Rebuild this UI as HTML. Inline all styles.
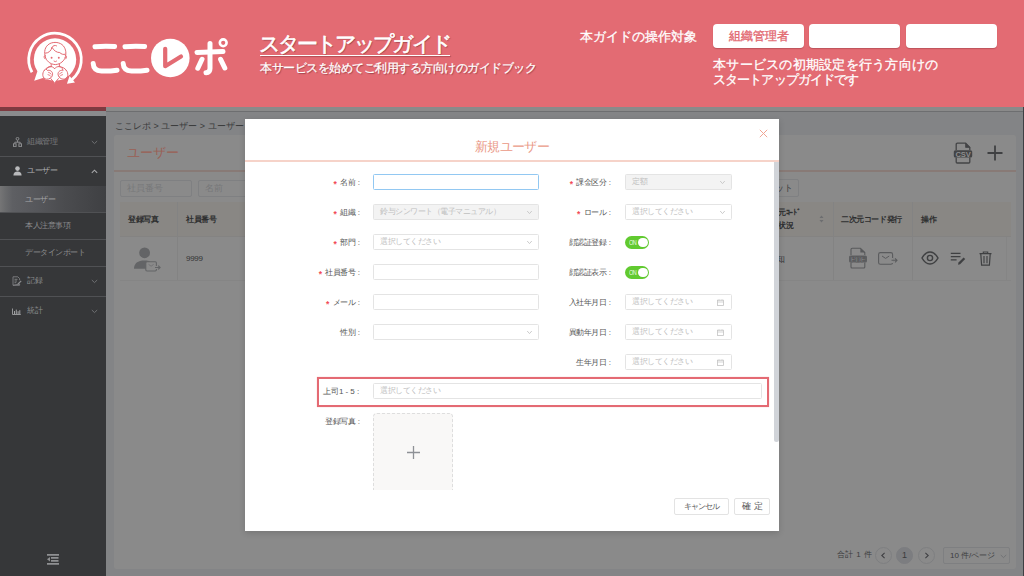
<!DOCTYPE html>
<html lang="ja">
<head>
<meta charset="utf-8">
<title>スタートアップガイド</title>
<style>
*{box-sizing:border-box;margin:0;padding:0}
html,body{width:1024px;height:576px;overflow:hidden}
body{position:relative;font-family:"Liberation Sans",sans-serif;background:#838486;color:#333}
.a{position:absolute}
/* header banner */
#hdr{left:0;top:0;width:1024px;height:107px;background:#E36B73;color:#fff}
#title{left:259px;top:33px;font-size:21px;line-height:22px;letter-spacing:-2.8px;white-space:nowrap;-webkit-text-stroke:0.65px #fff;text-shadow:1px 1px 1px rgba(90,30,35,.5)}
#title-ul{left:260px;top:55px;width:190px;height:1px;background:#fff;box-shadow:1px 1px 1px rgba(90,30,35,.4)}
#sub{left:260px;top:61px;font-size:12px;line-height:15px;white-space:nowrap;letter-spacing:-0.5px;-webkit-text-stroke:0.25px #fff;text-shadow:1px 1px 1px rgba(90,30,35,.5)}
#tgt{left:580px;top:29px;font-size:13px;line-height:16px;white-space:nowrap;-webkit-text-stroke:0.3px #fff}
.hbtn{top:24px;height:24px;background:#fff;border-radius:4px;color:#E36B73;font-size:12px;line-height:25px;text-align:center;-webkit-text-stroke:0.35px #E36B73;box-shadow:0 1px 1px rgba(120,40,45,.35)}
#desc{left:713px;top:58px;font-size:13px;line-height:14.5px;white-space:nowrap;-webkit-text-stroke:0.3px #fff}
/* app strip */
#apphdrL{left:0;top:107px;width:106px;height:4px;background:#7d3a40}
#apphdrR{left:106px;top:107px;width:918px;height:4px;background:#8a8a8a}
#apphdrLine{left:106px;top:111px;width:918px;height:1px;background:#6d6e70}
#strip{left:0;top:111px;width:106px;height:5px;background:#8a8b8d}
#rightedge{left:1023px;top:107px;width:1px;height:469px;background:#3e3f43}
/* sidebar */
#side{left:0;top:116px;width:106px;height:460px;background:#363739}
.sep{left:0;width:106px;height:1px;background:#505154}
.mi{left:0;width:106px;height:20px;font-size:8px;line-height:20px;color:#8e8f91;white-space:nowrap;letter-spacing:-0.5px}
/* card */
#bc{left:115px;top:119px;font-size:9px;line-height:14px;color:#3a3b3c;white-space:nowrap}
#card{left:114px;top:135px;width:902px;height:434px;background:#8a8a8a;border-radius:2px}
.inp{height:17px;border:1px solid #7f8082;border-radius:2px}
.inp span{position:absolute;left:6px;top:0;font-size:9px;line-height:15px;color:#767779;white-space:nowrap}
.th{font-size:8px;line-height:16px;color:#2e2f30;font-weight:bold;white-space:nowrap;letter-spacing:-0.4px}
.td{font-size:9px;line-height:14px;color:#333435;white-space:nowrap}
.pg{width:17px;height:17px;border:1px solid #7e7f81;border-radius:50%}
.pg svg{position:absolute;left:-1px;top:-1px}
#mtitle{left:0;width:534px;top:19px;text-align:center;font-size:13px;line-height:18px;color:#ea9886;letter-spacing:-0.6px;white-space:nowrap}
#mscroll{left:529px;top:43px;width:5px;height:280px;background:#d1d4d9;border-radius:0 0 3px 3px}
.lab{font-size:8px;line-height:17.5px;color:#555;white-space:nowrap;text-align:right;letter-spacing:-0.6px;padding-right:5px}
.lab b{color:#f24a55;font-weight:bold;font-size:8.5px;margin-right:4px;position:relative;top:1.5px}
.lab u{position:absolute;right:0.6px;top:0;text-decoration:none;font-size:8px}
.fi{height:16px;border:1px solid #e4e4e4;border-radius:1.5px;background:#fff}
.fi span{position:absolute;left:6px;top:0;font-size:8px;line-height:14px;color:#c0c0c0;white-space:nowrap;letter-spacing:-0.5px}
.dis{background:#f3f3f3}
.tog{width:24px;height:12.5px;border-radius:6.5px;background:#61ca30}
.tog span{position:absolute;left:4px;top:0.8px;font-size:6.5px;line-height:12.5px;color:#e8f8e0;letter-spacing:-0.6px;transform:scaleX(0.85);transform-origin:left}
.tog i{position:absolute;right:1.5px;top:1.5px;width:9.5px;height:9.5px;border-radius:50%;background:#fff}
.mbtn{top:379px;height:17px;border:1px solid #e3e3e3;border-radius:2px;font-size:8.5px;line-height:15px;text-align:center;color:#555;white-space:nowrap}
/* overlay modal */
#modal{left:245px;top:119px;width:534px;height:412px;background:#fff;box-shadow:0 2px 6px rgba(0,0,0,.15)}
</style>
</head>
<body>
<!-- underlying app (dimmed) -->
<div class="a" id="apphdrL"></div>
<div class="a" id="apphdrR"></div>
<div class="a" id="apphdrLine"></div>
<div class="a" id="strip"></div>
<div class="a" id="side">
 <div class="a mi" style="top:16px"><svg class="a" style="left:13px;top:5px" width="9" height="10" viewBox="0 0 9 10"><circle cx="4.5" cy="1.8" r="1.4" fill="none" stroke="#8b8c8e" stroke-width="1"/><path d="M4.5 3.3V5.2M1.8 5.2H7.2M1.8 5.2V6.6M7.2 5.2V6.6" stroke="#8b8c8e" stroke-width="1" fill="none"/><rect x="0.5" y="6.8" width="2.6" height="2.6" fill="none" stroke="#8b8c8e" stroke-width="1"/><rect x="5.9" y="6.8" width="2.6" height="2.6" fill="none" stroke="#8b8c8e" stroke-width="1"/></svg><span class="a" style="left:27px;color:#7b7c7f">組織管理</span><svg class="a chev" style="left:91px;top:8px" width="7" height="5" viewBox="0 0 7 5"><path d="M0.8 1L3.5 3.6L6.2 1" fill="none" stroke="#6f7073" stroke-width="1"/></svg></div>
 <div class="a sep" style="top:40px"></div>
 <div class="a mi" style="top:45px"><svg class="a" style="left:13px;top:5px" width="9" height="10" viewBox="0 0 9 10"><circle cx="4.5" cy="2.6" r="2.3" fill="#b9babc"/><path d="M0.4 9.6C0.4 6.8 2 5.6 4.5 5.6C7 5.6 8.6 6.8 8.6 9.6Z" fill="#b9babc"/></svg><span class="a" style="left:27px;color:#b4b5b7">ユーザー</span><svg class="a" style="left:91px;top:8px" width="7" height="5" viewBox="0 0 7 5"><path d="M0.8 3.8L3.5 1.2L6.2 3.8" fill="none" stroke="#a8a9ab" stroke-width="1.1"/></svg></div>
 <div class="a" style="left:0;top:70px;width:106px;height:26px;background:linear-gradient(90deg,#757576 0%,#6a6b6d 5%,#5e5f63 12%,#56575b 35%,#4b4c4f 60%,#3f4043 100%)"><span class="a" style="left:25px;top:4px;font-size:8px;line-height:20px;color:#a6a7a9;white-space:nowrap;letter-spacing:-0.5px">ユーザー</span></div>
 <div class="a sep" style="top:96px"></div>
 <div class="a mi" style="top:100px"><span class="a" style="left:25px;color:#8b8c8e">本人注意事項</span></div>
 <div class="a sep" style="top:123px"></div>
 <div class="a mi" style="top:127px"><span class="a" style="left:25px;color:#8b8c8e">データインポート</span></div>
 <div class="a sep" style="top:150px"></div>
 <div class="a mi" style="top:155px"><svg class="a" style="left:12px;top:5px" width="10" height="10" viewBox="0 0 10 10"><path d="M1 0.8H5.8L7.6 2.6V4.2M7.6 8V9.3H1Z" fill="none" stroke="#7f8083" stroke-width="0.9"/><path d="M1 0.8V9.3" stroke="#7f8083" stroke-width="0.9"/><path d="M2.5 3.3H5.5M2.5 5H5M2.5 6.7H4.3" stroke="#8e8f91" stroke-width="0.8"/><path d="M5.6 7.6L8.8 4.4L9.6 5.2L6.4 8.4H5.6Z" fill="#8e8f91"/></svg><span class="a" style="left:27px;color:#8b8c8e">記録</span><svg class="a" style="left:91px;top:8px" width="7" height="5" viewBox="0 0 7 5"><path d="M0.8 1L3.5 3.6L6.2 1" fill="none" stroke="#6f7073" stroke-width="1"/></svg></div>
 <div class="a sep" style="top:180px"></div>
 <div class="a mi" style="top:185px"><svg class="a" style="left:12px;top:7px" width="9" height="7" viewBox="0 0 9 7"><path d="M0.5 0.5V6.5H8.8" fill="none" stroke="#a0a1a3" stroke-width="0.9"/><path d="M2.5 3V6M4.3 1.6V6M6.1 3.2V6M7.8 2.2V6" stroke="#a0a1a3" stroke-width="1"/></svg><span class="a" style="left:27px;color:#8b8c8e">統計</span><svg class="a" style="left:91px;top:8px" width="7" height="5" viewBox="0 0 7 5"><path d="M0.8 1L3.5 3.6L6.2 1" fill="none" stroke="#6f7073" stroke-width="1"/></svg></div>
 <svg class="a" style="left:46px;top:437px" width="14" height="12" viewBox="0 0 14 12"><path d="M1 1.8H13M5 4.8H12.5M5 7.8H12.5M1 10.8H13" stroke="#8f9092" stroke-width="1.7"/><path d="M4 4L1 6.3L4 8.6Z" fill="#8f9092"/></svg>
</div>
<div class="a" id="bc">ここレポ &gt; ユーザー &gt; ユーザー</div>
<div class="a" id="card">
 <div class="a" style="left:13px;top:9px;font-size:13px;line-height:18px;color:#9a5f54;white-space:nowrap">ユーザー</div>
 <div class="a" style="left:0;top:35px;width:902px;height:2px;background:#887a76"></div>
 <svg class="a" style="left:839px;top:7px" width="20" height="22" viewBox="0 0 20 22"><path d="M3.2 8V2.5Q3.2 1.2 4.5 1.2H12.6L16.8 5.4V8M16.8 15.5V20Q16.8 21 15.8 21H4.2Q3.2 21 3.2 20V15.5" fill="none" stroke="#434446" stroke-width="1.3"/><path d="M12.6 1.2V5.4H16.8Z" fill="#434446" stroke="#434446" stroke-width="0.8"/><rect x="0.8" y="8.2" width="18.4" height="7.4" rx="1.6" fill="#434446"/><text x="10" y="14.6" font-size="7.6" font-family="Liberation Sans" font-weight="bold" fill="#8e8e8e" text-anchor="middle" letter-spacing="-0.2">CSV</text></svg>
 <svg class="a" style="left:873px;top:10px" width="16" height="16" viewBox="0 0 16 16"><path d="M8 0.5V15.5M0.5 8H15.5" stroke="#3f4042" stroke-width="1.8"/></svg>
 <div class="a inp" style="left:6px;top:45px;width:72px"><span>社員番号</span></div>
 <div class="a inp" style="left:84px;top:45px;width:120px"><span>名前</span></div>
 <div class="a inp" style="left:640px;top:44px;width:45px;height:18px"><span style="left:3px;top:0.5px;color:#3e3f41;letter-spacing:-0.4px">リセット</span></div>
 <div class="a" style="left:6px;top:67px;width:891px;height:34px;background:#898784"></div>
 <div class="a" style="left:63px;top:67px;width:1px;height:78px;background:#838383"></div>
 <div class="a" style="left:719px;top:67px;width:1px;height:78px;background:#838383"></div>
 <div class="a" style="left:798px;top:67px;width:1px;height:78px;background:#838383"></div>
 <div class="a" style="left:6px;top:101px;width:891px;height:1px;background:#848382"></div>
 <div class="a" style="left:892px;top:102px;width:1px;height:43px;background:#858585"></div>
 <div class="a" style="left:6px;top:145px;width:891px;height:1px;background:#858585"></div>
 <div class="a th" style="left:14px;top:77px">登録写真</div>
 <div class="a th" style="left:72px;top:77px">社員番号</div>
 <div class="a th" style="left:649px;top:71px;line-height:13px">二次元ｺｰﾄﾞ<br>通知状況</div>
 <div class="a th" style="left:727px;top:77px">二次元コード発行</div>
 <div class="a th" style="left:807px;top:77px">操作</div>
 <svg class="a" style="left:705px;top:80px" width="5" height="8" viewBox="0 0 5 8"><path d="M2.5 0.5L4.5 3H0.5ZM2.5 7.5L4.5 5H0.5Z" fill="#6d6e70"/></svg>
 <svg class="a" style="left:20px;top:112px" width="28" height="28" viewBox="0 0 28 28"><circle cx="10.6" cy="5.8" r="5.4" fill="#636466"/><path d="M0 21.8C0 16 3.8 13.4 10.6 13.4C13 13.4 14.8 13.8 16 14.4V21.8Z" fill="#636466"/><rect x="11.8" y="14.8" width="10.6" height="9.2" rx="1.2" fill="#8a8a8a" stroke="#636466" stroke-width="1.1"/><path d="M14.6 17.4L17.1 19.2L19.6 17.4" fill="none" stroke="#707173" stroke-width="0.9"/><rect x="20.8" y="19" width="2.5" height="3" fill="#8a8a8a"/><path d="M21 20.5H26M24.2 18.6L26.1 20.5L24.2 22.4" fill="none" stroke="#636466" stroke-width="1.1"/></svg>
 <div class="a td" style="left:72px;top:117px;font-size:8px;letter-spacing:-0.3px">9999</div>
 <div class="a td" style="left:644px;top:117px;font-size:8.5px">未通知</div>
 <svg class="a" style="left:734px;top:112px" width="20" height="22" viewBox="0 0 20 22"><path d="M3 8V2.5Q3 1.2 4.3 1.2H12.4L16.8 5.6V8M16.8 15.5V20Q16.8 21 15.8 21H4Q3 21 3 20V15.5" fill="none" stroke="#58595b" stroke-width="1.1"/><path d="M12.4 1.2V5.6H16.8Z" fill="#58595b"/><rect x="1" y="8.4" width="18" height="7.2" rx="1.6" fill="#5e5f61"/><text x="10" y="14.5" font-size="7.8" font-family="Liberation Sans" font-weight="bold" fill="#9a9a9a" stroke="#505153" stroke-width="0.5" text-anchor="middle" letter-spacing="-0.3">PDF</text></svg>
 <svg class="a" style="left:764px;top:117px" width="20" height="14" viewBox="0 0 20 14"><rect x="0.6" y="0.6" width="14" height="11.6" rx="1.8" fill="none" stroke="#5a5b5d" stroke-width="1.1"/><path d="M4 4L7.6 6.4L11.2 4" fill="none" stroke="#5a5b5d" stroke-width="1"/><rect x="13" y="6" width="2.2" height="5" fill="#8a8a8a"/><path d="M13.5 8.3H19M17 6.3L19 8.3L17 10.3" fill="none" stroke="#5a5b5d" stroke-width="1.1"/></svg>
 <svg class="a" style="left:807px;top:116px" width="18" height="14" viewBox="0 0 18 14"><path d="M1 7C3.2 3 5.8 1 9 1S14.8 3 17 7C14.8 11 12.2 13 9 13S3.2 11 1 7Z" fill="none" stroke="#3f4042" stroke-width="1.5"/><circle cx="9" cy="7" r="2.6" fill="none" stroke="#3f4042" stroke-width="1.4"/></svg>
 <svg class="a" style="left:836px;top:117px" width="16" height="14" viewBox="0 0 16 14"><path d="M0.8 1.4H10.5M0.8 4.6H10.5M0.8 7.8H6.6" stroke="#3f4042" stroke-width="1.2"/><path d="M8 12.8L8.5 10.6L13.6 5.5L15.2 7.1L10.1 12.2Z" fill="#3f4042"/></svg>
 <svg class="a" style="left:865px;top:116px" width="13" height="15" viewBox="0 0 13 15"><path d="M0.5 2.6H12.5M4.3 2.6V1H8.7V2.6" fill="none" stroke="#3f4042" stroke-width="1.1"/><path d="M1.8 3L2.6 14.2H10.4L11.2 3" fill="none" stroke="#3f4042" stroke-width="1.2"/><path d="M5 5V12.3M8 5V12.3" stroke="#3f4042" stroke-width="1.1"/></svg>
 <div class="a" style="left:723px;top:414px;font-size:8px;line-height:12px;color:#3c3d3f;white-space:nowrap;word-spacing:1px">合計 1 件</div>
 <div class="a pg" style="left:761px;top:412px"><svg width="17" height="17" viewBox="0 0 17 17"><path d="M9.6 5.8L6.8 8.5L9.6 11.2" fill="none" stroke="#404144" stroke-width="1.1"/></svg></div>
 <div class="a pg" style="left:782px;top:412px;background:#7c7d80;border-color:#7c7d80;font-size:9px;line-height:15px;text-align:center;color:#3a3b3d">1</div>
 <div class="a pg" style="left:804px;top:412px"><svg width="17" height="17" viewBox="0 0 17 17"><path d="M7.4 5.8L10.2 8.5L7.4 11.2" fill="none" stroke="#404144" stroke-width="1.1"/></svg></div>
 <div class="a" style="left:829px;top:412px;width:67px;height:17px;border:1px solid #7e7f81;border-radius:2px;font-size:8px;line-height:15px;color:#3c3d3f;white-space:nowrap;padding-left:6px">10 件/ページ<svg class="a" style="left:56px;top:6px" width="7" height="5" viewBox="0 0 7 5"><path d="M0.8 1L3.5 3.6L6.2 1" fill="none" stroke="#6f7073" stroke-width="0.9"/></svg></div>
</div>
<div class="a" id="rightedge"></div>

<!-- modal -->
<div class="a" id="modal">
<div class="a" id="mtitle">新規ユーザー</div>
<svg class="a" style="left:514px;top:10px" width="9" height="9" viewBox="0 0 9 9"><path d="M0.8 0.8L8.2 8.2M8.2 0.8L0.8 8.2" stroke="#f0a594" stroke-width="1"/></svg>
<div class="a" style="left:0;top:41px;width:534px;height:2px;background:#f6d3c9"></div>
<div class="a" id="mscroll"></div>
<div class="a lab" style="right:419px;top:55px"><b>*</b>名前<u>:</u></div>
<div class="a fi" style="left:128px;top:55px;width:166px;border-color:#92c8f2"></div>
<div class="a lab" style="right:419px;top:85px"><b>*</b>組織<u>:</u></div>
<div class="a fi dis" style="left:128px;top:85px;width:166px"><span>鈴与シンワート（電子マニュアル）</span><svg class="a" style="right:5.5px;top:5px" width="7" height="5" viewBox="0 0 7 5"><path d="M1.2 1L3.5 3.6L5.8 1" fill="none" stroke="#c4c4c4" stroke-width="0.85"/></svg></div>
<div class="a lab" style="right:419px;top:115px"><b>*</b>部門<u>:</u></div>
<div class="a fi" style="left:128px;top:115px;width:166px"><span>選択してください</span><svg class="a" style="right:5.5px;top:5px" width="7" height="5" viewBox="0 0 7 5"><path d="M1.2 1L3.5 3.6L5.8 1" fill="none" stroke="#c4c4c4" stroke-width="0.85"/></svg></div>
<div class="a lab" style="right:419px;top:145px"><b>*</b>社員番号<u>:</u></div>
<div class="a fi" style="left:128px;top:145px;width:166px"></div>
<div class="a lab" style="right:419px;top:175px"><b>*</b>メール<u>:</u></div>
<div class="a fi" style="left:128px;top:175px;width:166px"></div>
<div class="a lab" style="right:419px;top:205px">性別<u>:</u></div>
<div class="a fi" style="left:128px;top:205px;width:166px"><svg class="a" style="right:5.5px;top:5px" width="7" height="5" viewBox="0 0 7 5"><path d="M1.2 1L3.5 3.6L5.8 1" fill="none" stroke="#c4c4c4" stroke-width="0.85"/></svg></div>
<div class="a lab" style="right:168px;top:55px"><b>*</b>課金区分<u>:</u></div>
<div class="a fi dis" style="left:380px;top:55px;width:107px"><span>定額</span><svg class="a" style="right:5.5px;top:5px" width="7" height="5" viewBox="0 0 7 5"><path d="M1.2 1L3.5 3.6L5.8 1" fill="none" stroke="#c4c4c4" stroke-width="0.85"/></svg></div>
<div class="a lab" style="right:168px;top:85px"><b>*</b>ロール<u>:</u></div>
<div class="a fi" style="left:380px;top:85px;width:107px"><span>選択してください</span><svg class="a" style="right:5.5px;top:5px" width="7" height="5" viewBox="0 0 7 5"><path d="M1.2 1L3.5 3.6L5.8 1" fill="none" stroke="#c4c4c4" stroke-width="0.85"/></svg></div>
<div class="a lab" style="right:168px;top:115px">顔認証登録<u>:</u></div>
<div class="a tog" style="left:380px;top:117px"><span>ON</span><i></i></div>
<div class="a lab" style="right:168px;top:145px">顔認証表示<u>:</u></div>
<div class="a tog" style="left:380px;top:147px"><span>ON</span><i></i></div>
<div class="a lab" style="right:168px;top:175px">入社年月日<u>:</u></div>
<div class="a fi" style="left:380px;top:175px;width:107px"><span>選択してください</span><svg class="a" style="right:7px;top:4px" width="7" height="7" viewBox="0 0 7 7"><rect x="0.5" y="1.2" width="6" height="5.3" fill="none" stroke="#c4c4c4" stroke-width="0.8"/><path d="M0.5 3H6.5M2 0.3V1.8M5 0.3V1.8" stroke="#c4c4c4" stroke-width="0.7"/></svg></div>
<div class="a lab" style="right:168px;top:205px">異動年月日<u>:</u></div>
<div class="a fi" style="left:380px;top:205px;width:107px"><span>選択してください</span><svg class="a" style="right:7px;top:4px" width="7" height="7" viewBox="0 0 7 7"><rect x="0.5" y="1.2" width="6" height="5.3" fill="none" stroke="#c4c4c4" stroke-width="0.8"/><path d="M0.5 3H6.5M2 0.3V1.8M5 0.3V1.8" stroke="#c4c4c4" stroke-width="0.7"/></svg></div>
<div class="a lab" style="right:168px;top:235px">生年月日<u>:</u></div>
<div class="a fi" style="left:380px;top:235px;width:107px"><span>選択してください</span><svg class="a" style="right:7px;top:4px" width="7" height="7" viewBox="0 0 7 7"><rect x="0.5" y="1.2" width="6" height="5.3" fill="none" stroke="#c4c4c4" stroke-width="0.8"/><path d="M0.5 3H6.5M2 0.3V1.8M5 0.3V1.8" stroke="#c4c4c4" stroke-width="0.7"/></svg></div>
<div class="a" style="left:72px;top:257.5px;width:452px;height:30.5px;border:2px solid #e46a73;box-shadow:0 0 0.7px #e46a73"></div>
<div class="a lab" style="letter-spacing:0.2px;word-spacing:-0.5px;right:419px;top:264px">上司1 - 5<u>:</u></div>
<div class="a fi" style="left:128px;top:264px;width:389px"><span>選択してください</span></div>
<div class="a lab" style="right:419px;top:294px">登録写真<u>:</u></div>
<div class="a" style="left:128px;top:294px;width:80px;height:77px;background:#f9f8f7;border:1px dashed #dedede;border-bottom:none;border-radius:4px 4px 0 0"><svg class="a" style="left:33px;top:32px" width="13" height="13" viewBox="0 0 13 13"><path d="M6.5 0V13M0 6.5H13" stroke="#8e9196" stroke-width="1.3"/></svg></div>
<div class="a mbtn" style="left:429px;width:55px;letter-spacing:-0.9px;font-size:8px">キャンセル</div>
<div class="a mbtn" style="left:489px;width:36px;letter-spacing:3px;padding-left:3px">確定</div>
</div>

<!-- guide banner -->
<div class="a" id="hdr">
<svg class="a" style="left:0;top:0" width="240" height="100" viewBox="0 0 240 100">
<path d="M32.00 72.25A26.3 26.3 0 1 1 71.91 79.65" fill="none" stroke="#fff" stroke-width="2.8"/>
<path d="M66.93 83.83L74.99 82.54L69.59 76.11Z" fill="#fff"/>
<circle cx="55" cy="59.5" r="21.2" fill="#fff"/>
<path d="M37.5 71L34.2 80.8L44.5 77.5Z" fill="#fff"/>
<path d="M42 69.5C41 74 42.5 79.5 47 79.8C50 80 51.5 79 53 80.5L54.6 83.5L56.2 80.5C57.7 79 59.2 80 62.2 79.8C66.7 79.5 68.2 74 67.2 69.5Z" fill="#fff"/>
<g fill="none" stroke="#E36B73" stroke-width="1" stroke-linecap="round" stroke-linejoin="round">
<path d="M45.3 57C43.8 52 44.6 46.5 49.8 43.6C54 41.6 60 42 63.3 45.8C66.2 49.4 66.4 53.8 65.2 57.5"/>
<path d="M45.3 57C46.4 60.5 49.5 64.2 55.3 64.6C61 64.2 64.2 60.5 65.2 57.5"/>
<path d="M45.5 53.2C48.8 53 51.2 50.8 52 47.2C53.5 50.5 56.8 52.6 59.8 52.6C61.2 54 63.2 55 65.4 54.2"/>
<path d="M52 47.2C53 45.5 55 45 56.5 45.8"/>
<path d="M45.4 55.5C44 55.2 43.3 57.5 45.2 59M65.3 55.5C66.7 55.2 67.4 57.5 65.5 59"/>
<path d="M51.2 64.3L51.2 66.6M59.4 64.3L59.4 66.6"/>
<path d="M51.2 66.6C48.5 67 45.5 68 44.2 70.5M59.4 66.6C62.1 67 65.1 68 66.4 70.5"/>
<path d="M54.6 68.6C52.4 65.6 47.3 65.6 46.4 69.6M54.6 68.6C56.8 65.6 61.9 65.6 62.8 69.6"/>
<path d="M50.8 78.6L54.6 83.2L58.4 78.6"/>
<path d="M44.2 70.5C41.8 73 42.2 78.8 46.5 79.2C49.5 79.5 52.5 77.2 52.6 74.2C52.6 71.5 50 69.6 47.6 70.4"/>
<path d="M66.4 70.5C68.8 73 68.4 78.8 64.1 79.2C61.1 79.5 58.1 77.2 58 74.2C58 71.5 60.6 69.6 63 70.4"/>
<path d="M48.5 72.3Q50.5 72.6 51.2 74.2M48 74.6Q50.2 75 51 76.4M62.1 72.3Q60.1 72.6 59.4 74.2M62.6 74.6Q60.4 75 59.6 76.4" stroke-width="0.8"/>
</g>
<circle cx="51.6" cy="57.7" r="0.95" fill="#E36B73"/><circle cx="58.8" cy="57.7" r="0.95" fill="#E36B73"/>
<path d="M53.7 60.9Q55.3 62.4 56.9 60.9" stroke="#E36B73" stroke-width="0.9" fill="none"/>
<g fill="none" stroke="#fff" stroke-width="5" stroke-linecap="round" stroke-linejoin="round">
<path d="M95 46.8Q105 45.6 114.6 46.6"/>
<path d="M93.2 63.5Q93.5 70.8 101.5 71Q109 71.3 117 70.2"/>
<path d="M125 46.8Q135 45.6 144.6 46.6"/>
<path d="M123.2 63.5Q123.5 70.8 131.5 71Q139 71.3 147 70.2"/>
<path d="M197 52.4L223 51.4"/>
<path d="M210 43.5V68.5Q210 72.5 206 72.8"/>
<path d="M202 59.3L197.8 68.2M220.6 59.3L224.8 68"/>
</g>
<circle cx="170.3" cy="58" r="19.3" fill="#fff"/>
<path d="M165.2 48.8V66.2L181 56.5" fill="none" stroke="#E36B73" stroke-width="4.2" stroke-linecap="round" stroke-linejoin="round"/>
<circle cx="223.2" cy="42.8" r="3.4" fill="none" stroke="#fff" stroke-width="2.6"/>
</svg>
<div class="a" id="title">スタートアップガイド</div>
<div class="a" id="title-ul"></div>
<div class="a" id="sub">本サービスを始めてご利用する方向けのガイドブック</div>
<div class="a" id="tgt">本ガイドの操作対象</div>
<div class="a hbtn" style="left:713px;width:91px">組織管理者</div>
<div class="a hbtn" style="left:809px;width:91px"></div>
<div class="a hbtn" style="left:906px;width:91px"></div>
<div class="a" id="desc"><span style="letter-spacing:0.25px">本サービスの初期設定を行う方向けの</span><br><span style="letter-spacing:-0.9px">スタートアップガイドです</span></div>
</div>
</body>
</html>
